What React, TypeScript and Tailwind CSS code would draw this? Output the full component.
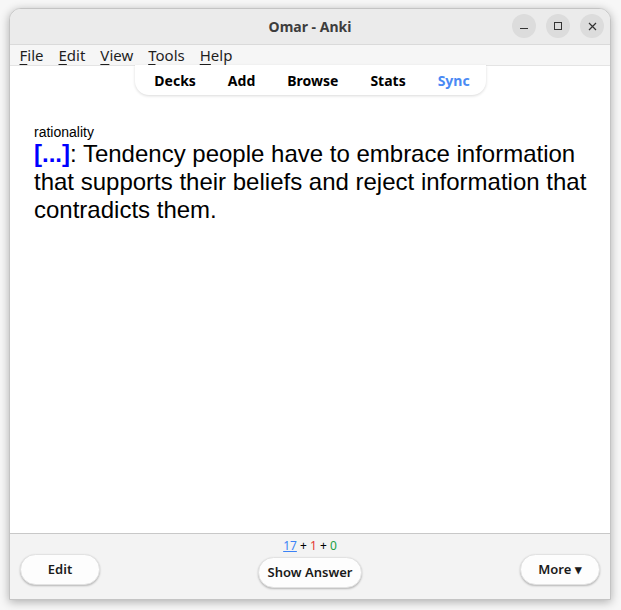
import React from 'react';

const ui = { fontFamily: '"Noto Sans", "Open Sans", sans-serif' };
const card = { fontFamily: '"Liberation Sans", Arial, sans-serif' };

const MenuItem: React.FC<{ label: string }> = ({ label }) => (
  <span className="px-[7.5px]">
    <span className="underline underline-offset-[3px] decoration-1">{label[0]}</span>
    {label.slice(1)}
  </span>
);

const PillButton: React.FC<{ children: React.ReactNode; className?: string }> = ({ children, className }) => (
  <button
    className={`h-[31px] rounded-[16px] bg-[#fdfdfd] border border-[#e2e2e2] shadow-[0_1px_2px_rgba(0,0,0,0.25)] text-[13px] font-semibold text-[#1a1a1a] ${className ?? ''}`}
    style={ui}
  >
    {children}
  </button>
);

export default function App() {
  return (
    <div className="w-[621px] h-[610px] bg-[#f7f7f7] pt-[8px] pl-[9px]">
      <div className="w-[602px] h-[592px] flex flex-col rounded-t-[12px] overflow-hidden border border-[#c4c4c4] shadow-[0_2px_10px_rgba(0,0,0,0.3)] bg-white">
        {/* title bar */}
        <div className="h-[36px] shrink-0 bg-[#ebebeb] flex items-center relative border-b border-[#dadada]" style={ui}>
          <div className="flex-1 text-center text-[14px] font-bold text-[#3d3d3d]">Omar - Anki</div>
          <div className="absolute right-[6px] top-[5px] flex gap-[10px]">
            <div className="w-[24px] h-[24px] rounded-full bg-[#dcdcdc] flex items-center justify-center">
              <div className="w-[8px] h-[1px] bg-[#333] mt-[5px]" />
            </div>
            <div className="w-[24px] h-[24px] rounded-full bg-[#dcdcdc] flex items-center justify-center">
              <div className="w-[8px] h-[8px] border border-[#333]" />
            </div>
            <div className="w-[24px] h-[24px] rounded-full bg-[#dcdcdc] flex items-center justify-center">
              <svg width="9" height="9" viewBox="0 0 9 9">
                <path d="M1 1L8 8M8 1L1 8" stroke="#333" strokeWidth="1.2" />
              </svg>
            </div>
          </div>
        </div>
        {/* menu bar */}
        <div className="h-[21px] shrink-0 bg-[#f6f6f6] flex items-center pl-[2px] text-[15px] text-[#1e1e1e] border-b border-[#e4e4e4]" style={ui}>
          <MenuItem label="File" />
          <MenuItem label="Edit" />
          <MenuItem label="View" />
          <MenuItem label="Tools" />
          <MenuItem label="Help" />
        </div>
        {/* content */}
        <div className="flex-1 flex flex-col bg-white">
          <div className="flex justify-center">
            <div className="w-[351px] h-[30px] -mt-[1px] rounded-b-[14px] bg-white shadow-[0_1px_3px_rgba(0,0,0,0.15)] flex items-center justify-center gap-[32px] pl-[4px] text-[14px] font-bold text-black" style={ui}>
              <span>Decks</span>
              <span>Add</span>
              <span>Browse</span>
              <span>Stats</span>
              <span className="text-[#4a8af4]">Sync</span>
            </div>
          </div>
          <div className="pl-[24px] pr-[8px] pt-[29px]" style={card}>
            <div className="text-[14px] leading-[16px] text-black">rationality</div>
            <div className="text-[24px] leading-[28px] text-black">
              <span className="font-bold text-[#0000ff]">[...]</span>: Tendency people have to embrace information that supports their beliefs and reject information that contradicts them.
            </div>
          </div>
        </div>
        {/* bottom bar */}
        <div className="h-[66px] shrink-0 bg-[#f3f3f3] border-t border-[#c8c8c8] flex items-start px-[10px]">
          <PillButton className="w-[80px] mt-[20px]">Edit</PillButton>
          <div className="flex-1 flex flex-col items-center">
            <div className="text-[12px] leading-[14px] mt-[5px] text-black" style={ui}>
              <span className="text-[#3b82f6] underline decoration-[#3b82f6]">17</span> + <span className="text-[#e53935]">1</span> + <span className="text-[#22a045]">0</span>
            </div>
            <PillButton className="w-[104px] mt-[4px]">Show Answer</PillButton>
          </div>
          <PillButton className="w-[80px] mt-[20px]">More ▾</PillButton>
        </div>
      </div>
    </div>
  );
}
